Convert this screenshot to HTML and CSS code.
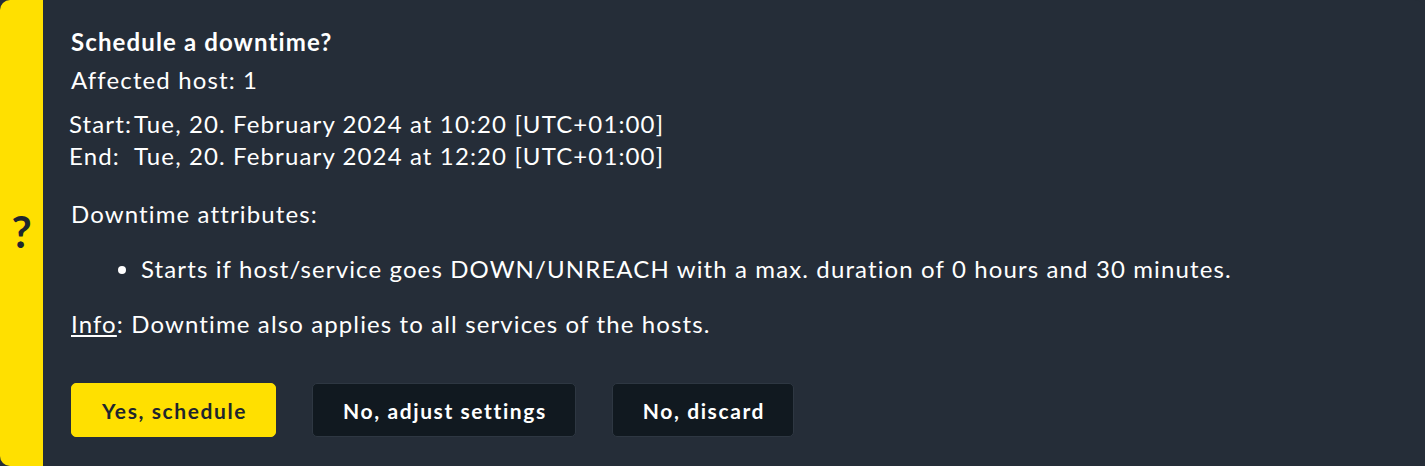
FILE: index.html
```html
<!DOCTYPE html>
<html lang="en">
<head>
    <title>Schedule a downtime?</title>
    <link rel="stylesheet" href="styles.css">
</head>
<body>
    <div class="confirm">
        <div class="stripe"><span class="qmark">?</span></div>
        <div class="content">
            <h3>Schedule a downtime?</h3>
            <p class="affected">Affected host: 1</p>
            <table class="period">
                <tr><td>Start:</td><td>Tue, 20. February 2024 at 10:20 [UTC+01:00]</td></tr>
                <tr><td>End:</td><td>Tue, 20. February 2024 at 12:20 [UTC+01:00]</td></tr>
            </table>
            <p class="attrs">Downtime attributes:</p>
            <ul>
                <li>Starts if host/service goes DOWN/UNREACH with a max. duration of 0 hours and 30 minutes.</li>
            </ul>
            <p class="info"><u>Info</u>: Downtime also applies to all services of the hosts.</p>
            <div class="buttons">
                <button class="primary">Yes, schedule</button>
                <button>No, adjust settings</button>
                <button>No, discard</button>
            </div>
        </div>
    </div>
</body>
</html>
```

FILE: styles.css
```css
* {
    margin: 0;
    padding: 0;
    box-sizing: border-box;
    font-family: 'Lato', sans-serif;
}

body {
    background: #252d38;
    color: #ffffff;
    width: 1425px;
    height: 466px;
    overflow: hidden;
}

.confirm {
    display: flex;
    height: 466px;
    background: #252d38;
    border-radius: 10px;
    overflow: hidden;
}

.stripe {
    width: 43px;
    flex-shrink: 0;
    background: #ffe000;
    display: flex;
    align-items: center;
    justify-content: center;
}

.qmark {
    color: #1e262e;
    font-size: 44px;
    font-weight: 700;
    line-height: 44px;
    margin-top: -4px;
}

.content {
    padding: 28px 28px 0 28px;
    font-size: 24px;
    letter-spacing: 1.12px;
}

h3 {
    font-size: 24px;
    font-weight: 700;
    line-height: 28px;
}

.affected {
    margin-top: 10px;
    line-height: 28px;
}

.period {
    margin-top: 14px;
    margin-left: -2px;
    border-spacing: 0;
    line-height: 32px;
}

.period td {
    padding: 0 2px 0 0;
}

.attrs {
    margin-top: 28px;
    line-height: 28px;
}

ul {
    margin-top: 27px;
    padding-left: 70px;
    line-height: 28px;
}

.info {
    margin-top: 27px;
    line-height: 28px;
}

.buttons {
    display: flex;
    gap: 36px;
    margin-top: 45px;
}

button {
    height: 54px;
    padding: 0 28px 0 30px;
    background: #111920;
    color: #ffffff;
    border: 1px solid #2e3742;
    border-radius: 5px;
    font-size: 21px;
    font-weight: 700;
    letter-spacing: 1.6px;
}

button.primary {
    background: #ffe000;
    border-color: #ffe000;
    color: #1e262e;
}
```
